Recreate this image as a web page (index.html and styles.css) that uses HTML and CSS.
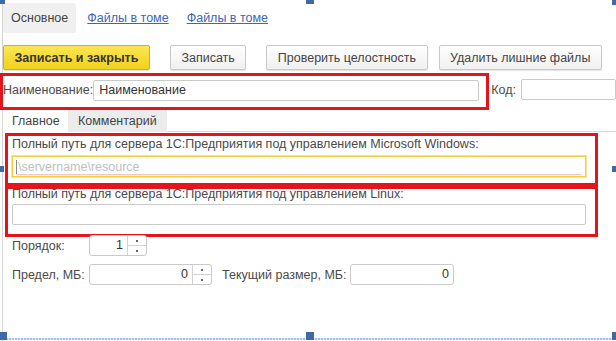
FILE: index.html
```html
<!DOCTYPE html>
<html lang="ru">
<head>
    <meta charset="UTF-8">
    <title>Том хранения файлов</title>
    <link rel="stylesheet" href="styles.css">
</head>
<body>
    <div class="form">
        <!-- selection frame of the designer -->
        <div class="selection"></div>

        <nav class="page-tabs">
            <span class="page-tab">Основное</span>
            <a class="page-link" href="#">Файлы в томе</a>
            <a class="page-link" href="#">Файлы в томе</a>
        </nav>

        <div class="toolbar">
            <button class="btn btn-primary">Записать и закрыть</button>
            <button class="btn btn-save">Записать</button>
            <button class="btn btn-check">Проверить целостность</button>
            <button class="btn btn-clean">Удалить лишние файлы</button>
        </div>

        <div class="name-row">
            <div class="mark name-mark">
                <span class="label">Наименование:</span>
                <div class="input name-input">Наименование</div>
            </div>
            <div class="code">
                <span class="label">Код:</span>
                <div class="input code-input"></div>
            </div>
        </div>

        <div class="tabs">
            <span class="tab active">Главное</span>
            <span class="tab">Комментарий</span>
            <span class="tab-rest"></span>
        </div>

        <div class="mark path-mark path-windows">
            <div class="path-label">Полный путь для сервера 1С:Предприятия под управлением Microsoft Windows:</div>
            <div class="input path-input focused">
                <span class="caret"></span>
                <span class="placeholder">\servername\resource</span>
                <span class="required-line"></span>
            </div>
        </div>

        <div class="mark path-mark path-linux">
            <div class="path-label">Полный путь для сервера 1С:Предприятия под управлением Linux:</div>
            <div class="input path-input"></div>
        </div>

        <div class="row row-order">
            <span class="label row-label">Порядок:</span>
            <div class="input number order-input">
                <span class="value">1</span>
                <span class="spin"><i class="up"></i><i class="down"></i></span>
            </div>
        </div>

        <div class="row row-limit">
            <span class="label row-label">Предел, МБ:</span>
            <div class="input number limit-input">
                <span class="value">0</span>
                <span class="spin"><i class="up"></i><i class="down"></i></span>
            </div>
            <span class="label size-label">Текущий размер, МБ:</span>
            <div class="input number size-input">
                <span class="value">0</span>
            </div>
        </div>

        <span class="handle h-tl"></span>
        <span class="handle h-tc"></span>
        <span class="handle h-tr"></span>
        <span class="handle h-ml"></span>
        <span class="handle h-mr"></span>
        <span class="handle h-bl"></span>
        <span class="handle h-bc"></span>
        <span class="handle h-br"></span>
    </div>
</body>
</html>
```

FILE: styles.css
```css
* {
    margin: 0;
    padding: 0;
    box-sizing: border-box;
}

body {
    font-family: 'Liberation Sans', Arial, sans-serif;
    font-size: 12.5px;
    color: #4a4a4a;
    background: #fff;
}

.form {
    position: relative;
    width: 616px;
    height: 341px;
    overflow: hidden;
}

/* Designer selection frame */
.selection {
    position: absolute;
    left: 2px;
    top: 0;
    right: 0;
    bottom: 0;
    border-left: 1px solid #d4d4d4;
    z-index: -1;
}

.selection::after {
    content: '';
    position: absolute;
    left: 0;
    right: 0;
    bottom: 1px;
    height: 2px;
    background: repeating-linear-gradient(90deg, #9fc2ee 0 2px, #dbe8f8 2px 3px);
}

.handle {
    position: absolute;
    width: 8px;
    height: 8px;
    background: #3f6aa5;
}

.h-tl { left: -3px; top: -4px; }
.h-tc { left: 306px; top: -4px; }
.h-tr { left: 612px; top: -3px; }
.h-ml { left: -4px; top: 166px; height: 6px; }
.h-mr { left: 612px; top: 166px; height: 6px; }
.h-bl { left: -1px; top: 332px; }
.h-bc { left: 306px; top: 332px; }
.h-br { left: 612px; top: 332px; }

/* Page tabs */
.page-tabs {
    display: flex;
    align-items: center;
    padding: 3px 0 0 3px;
    height: 33px;
}

.page-tab {
    height: 30px;
    line-height: 30px;
    padding: 0 8px;
    background: #f0f0f0;
    color: #444;
    border-radius: 2px;
}

.page-link {
    color: #3e66b3;
    text-decoration: underline;
    margin-left: 11px;
}

.page-link + .page-link {
    margin-left: 18px;
}

/* Command bar */
.toolbar {
    display: flex;
    margin-top: 12px;
    padding-left: 3px;
    height: 25px;
}

.btn {
    font-family: inherit;
    font-size: 12.5px;
    color: #444;
    height: 25px;
    padding: 0 10.5px;
    border: 1px solid #c9c9c9;
    border-radius: 2px;
    background: linear-gradient(#fff, #f0f0f0);
    box-shadow: 0 1px 1px rgba(0, 0, 0, 0.12);
}

.btn-primary {
    font-weight: bold;
    color: #333;
    border-color: #cdb21a;
    background: linear-gradient(#fbe654, #f3d21a);
}

.btn-save { margin-left: 20px; }
.btn-check { margin-left: 20px; }
.btn-clean { margin-left: 11px; }

/* Fields */
.input {
    height: 21px;
    border: 1px solid #cacaca;
    border-radius: 2px;
    background: #fff;
    color: #333;
}

.mark {
    border: 3px solid #e5141c;
}

.name-row {
    display: flex;
    align-items: flex-start;
    margin-top: 3px;
}

.name-mark {
    display: flex;
    align-items: center;
    justify-content: space-between;
    width: 490px;
    height: 37px;
    padding: 0 7px 3px 0;
}

.name-input {
    width: 386px;
    line-height: 19px;
    padding-left: 5px;
}

.code {
    display: flex;
    align-items: center;
    justify-content: space-between;
    width: 125px;
    margin: 6px 0 0 2px;
}

.code-input {
    width: 95px;
}

/* Inner tabs */
.tabs {
    display: flex;
    height: 22px;
    margin-left: 5px;
}

.tab {
    line-height: 22px;
    padding: 0 10px;
    background: #ececec;
    color: #444;
}

.tab.active {
    background: #fff;
    padding: 0 7px;
    width: 63px;
}

.tab-rest {
    flex: 1;
    border-bottom: 1px solid #d6d6d6;
}

.path-mark {
    width: 593px;
    margin-left: 5px;
    padding-left: 4px;
}

.path-windows {
    height: 53px;
    margin-top: 1px;
    padding-top: 1px;
}

.path-linux {
    height: 51px;
}

.path-label {
    line-height: 15px;
    white-space: nowrap;
}

.path-linux .path-label {
    margin-top: -2px;
}

.path-input {
    width: 574px;
    margin-top: 4px;
    position: relative;
}

.path-linux .path-input {
    margin-top: 2px;
}

.path-input.focused {
    border-color: #f2cf3c;
    outline: 1px solid #f9e48a;
    outline-offset: 0;
    border-radius: 0;
    display: flex;
    align-items: center;
    padding-left: 3px;
}

.caret {
    width: 1px;
    height: 14px;
    background: #888;
}

.placeholder {
    color: #c0c0c0;
    margin-left: 1px;
}

.required-line {
    position: absolute;
    left: 3px;
    right: 3px;
    bottom: 1px;
    height: 1px;
    background: #f6c3c6;
}

/* Number rows */
.row {
    display: flex;
    align-items: center;
    padding-left: 12px;
}

.row-order {
    margin-top: -2px;
}

.row-limit {
    margin-top: 8px;
}

.row-label {
    width: 77px;
}

.number {
    display: flex;
    border-radius: 3px;
}

.number .value {
    flex: 1;
    text-align: right;
    line-height: 19px;
    padding-right: 4px;
}

.order-input { width: 58px; }
.limit-input { width: 123px; }

.size-label {
    width: 128px;
    margin-left: 10px;
}

.size-input { width: 104px; }

.spin {
    width: 19px;
    display: flex;
    flex-direction: column;
    border-left: 1px solid #d2d2d2;
}

.spin i {
    flex: 1;
    display: flex;
    align-items: center;
    justify-content: center;
}

.spin i + i {
    border-top: 1px solid #d2d2d2;
}

.spin i::before {
    content: '';
    width: 2px;
    height: 2px;
    background: #666;
}
```
